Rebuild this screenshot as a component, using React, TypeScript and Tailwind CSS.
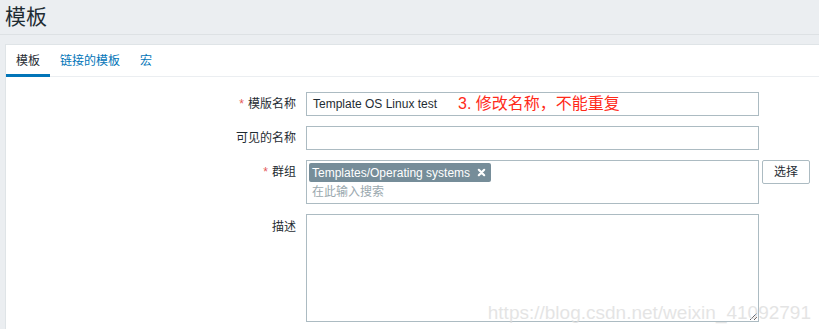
const font = "font-['Liberation_Sans','Noto_Sans_CJK_SC',sans-serif]"

function Label({ text, required }: { text: string; required?: boolean }) {
  return (
    <div className="w-[300px] shrink-0 pr-[10px] text-right text-[12px] leading-[14px] text-[#1f2c33]">
      {required && <span className="mr-[4px] text-[#e45959]">*</span>}
      {text}
    </div>
  )
}

export default function App() {
  return (
    <div className={`relative min-h-screen overflow-hidden bg-[#ebeef1] ${font}`}>
      {/* Header */}
      <div className="h-[35px] border-b border-[#dde1e4] px-[5px]">
        <h1 className="pt-[5px] text-[21px] leading-[24px] text-[#1f2c33]">模板</h1>
      </div>

      {/* Panel */}
      <div className="ml-[5px] mt-[9px] min-h-[300px] border-l border-t border-[#dfe4e7] bg-white">
        {/* Tabs */}
        <div className="flex border-b border-[#ebeef1] text-[12px] leading-[14px]">
          <div className="-mb-px border-b-[3px] border-[#0275b8] px-[10px] pb-[6px] pt-[9px] text-[#1f2c33]">模板</div>
          <div className="-mb-px border-b-[3px] border-transparent px-[10px] pb-[6px] pt-[9px] text-[#0275b8]">链接的模板</div>
          <div className="-mb-px border-b-[3px] border-transparent px-[10px] pb-[6px] pt-[9px] text-[#0275b8]">宏</div>
        </div>

        {/* Form */}
        <div className="flex flex-col gap-[10px] pt-[15px]">
          <div className="flex items-center">
            <Label text="模版名称" required />
            <div className="relative">
              <div className="flex h-[24px] w-[453px] items-center border border-[#acbbc2] px-[6px] text-[12px] text-[#1f2c33]">
                Template OS Linux test
              </div>
              <span className="absolute left-[152px] top-[2px] text-[16px] leading-[19px] text-[#ff2a1a]">3. 修改名称，不能重复</span>
            </div>
          </div>

          <div className="flex items-center">
            <Label text="可见的名称" />
            <div className="h-[24px] w-[453px] border border-[#acbbc2]" />
          </div>

          <div className="flex items-start">
            <div className="pt-[5px]">
              <Label text="群组" required />
            </div>
            <div className="flex h-[44px] w-[453px] flex-col items-start border border-[#acbbc2] px-[2px] pt-[2px]">
              <div className="flex h-[19px] items-center gap-[7px] rounded-[2px] bg-[#768d99] pl-[3px] pr-[5px] text-[12px] text-white">
                Templates/Operating systems
                <svg width="9" height="9" viewBox="0 0 10 10">
                  <path d="M2 2 L8 8 M8 2 L2 8" stroke="white" strokeWidth="2.4" strokeLinecap="round" />
                </svg>
              </div>
              <div className="pl-[3px] pt-[3px] text-[12px] leading-[14px] text-[#9aa8ae]">在此输入搜索</div>
            </div>
            <button className="ml-[3px] h-[24px] w-[48px] rounded-[2px] border border-[#acbbc2] bg-white text-[12px] text-[#1f2c33]">
              选择
            </button>
          </div>

          <div className="flex items-start">
            <div className="pt-[6px]">
              <Label text="描述" />
            </div>
            <textarea className="block h-[108px] w-[453px] border border-[#acbbc2] outline-none" />
          </div>
        </div>
      </div>

      {/* Watermark */}
      <div className="pointer-events-none absolute right-[8px] top-[302px] text-[19px] leading-[22px] text-[#dcdcdc] opacity-75">
        https://blog.csdn.net/weixin_41092791
      </div>
    </div>
  )
}
